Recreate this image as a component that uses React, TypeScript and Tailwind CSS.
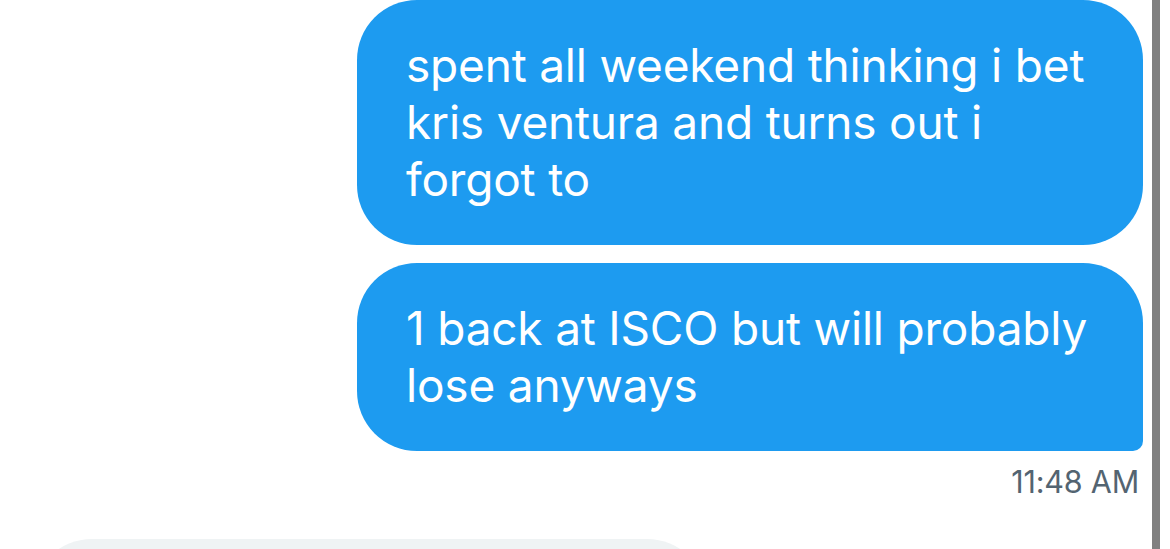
export default function App() {
  const font = { fontFamily: "Inter, 'Noto Sans', sans-serif" };
  return (
    <div className="flex h-[549px] w-[1170px] overflow-hidden bg-white" style={font}>
      {/* conversation */}
      <div className="flex flex-1 flex-col pr-[9px]">
        <div className="flex flex-col items-end">
          <div className="max-w-[786px] rounded-[60px] bg-[#1d9bf0] px-[49px] py-[37px] text-[46px] leading-[57px] tracking-[-0.2px] text-white">
            spent all weekend thinking i bet kris ventura and turns out i forgot to
          </div>
          <div className="mt-[18px] max-w-[786px] rounded-[60px] rounded-br-[10px] bg-[#1d9bf0] px-[49px] py-[37px] text-[46px] leading-[57px] tracking-[-0.2px] text-white">
            1 back at ISCO but will probably lose anyways
          </div>
          <div className="mt-[13px] pr-[4px] text-[30.5px] leading-[36px] tracking-[-0.2px] text-[#536471]">
            11:48 AM
          </div>
        </div>
        <div className="ml-[32px] mt-[39px] h-[120px] w-[675px] shrink-0 rounded-[60px] bg-[#eff3f4]" />
      </div>
      {/* scroll edge */}
      <div className="w-[8px] shrink-0 bg-[#808080]" />
      <div className="w-[10px] shrink-0 bg-white" />
    </div>
  );
}
